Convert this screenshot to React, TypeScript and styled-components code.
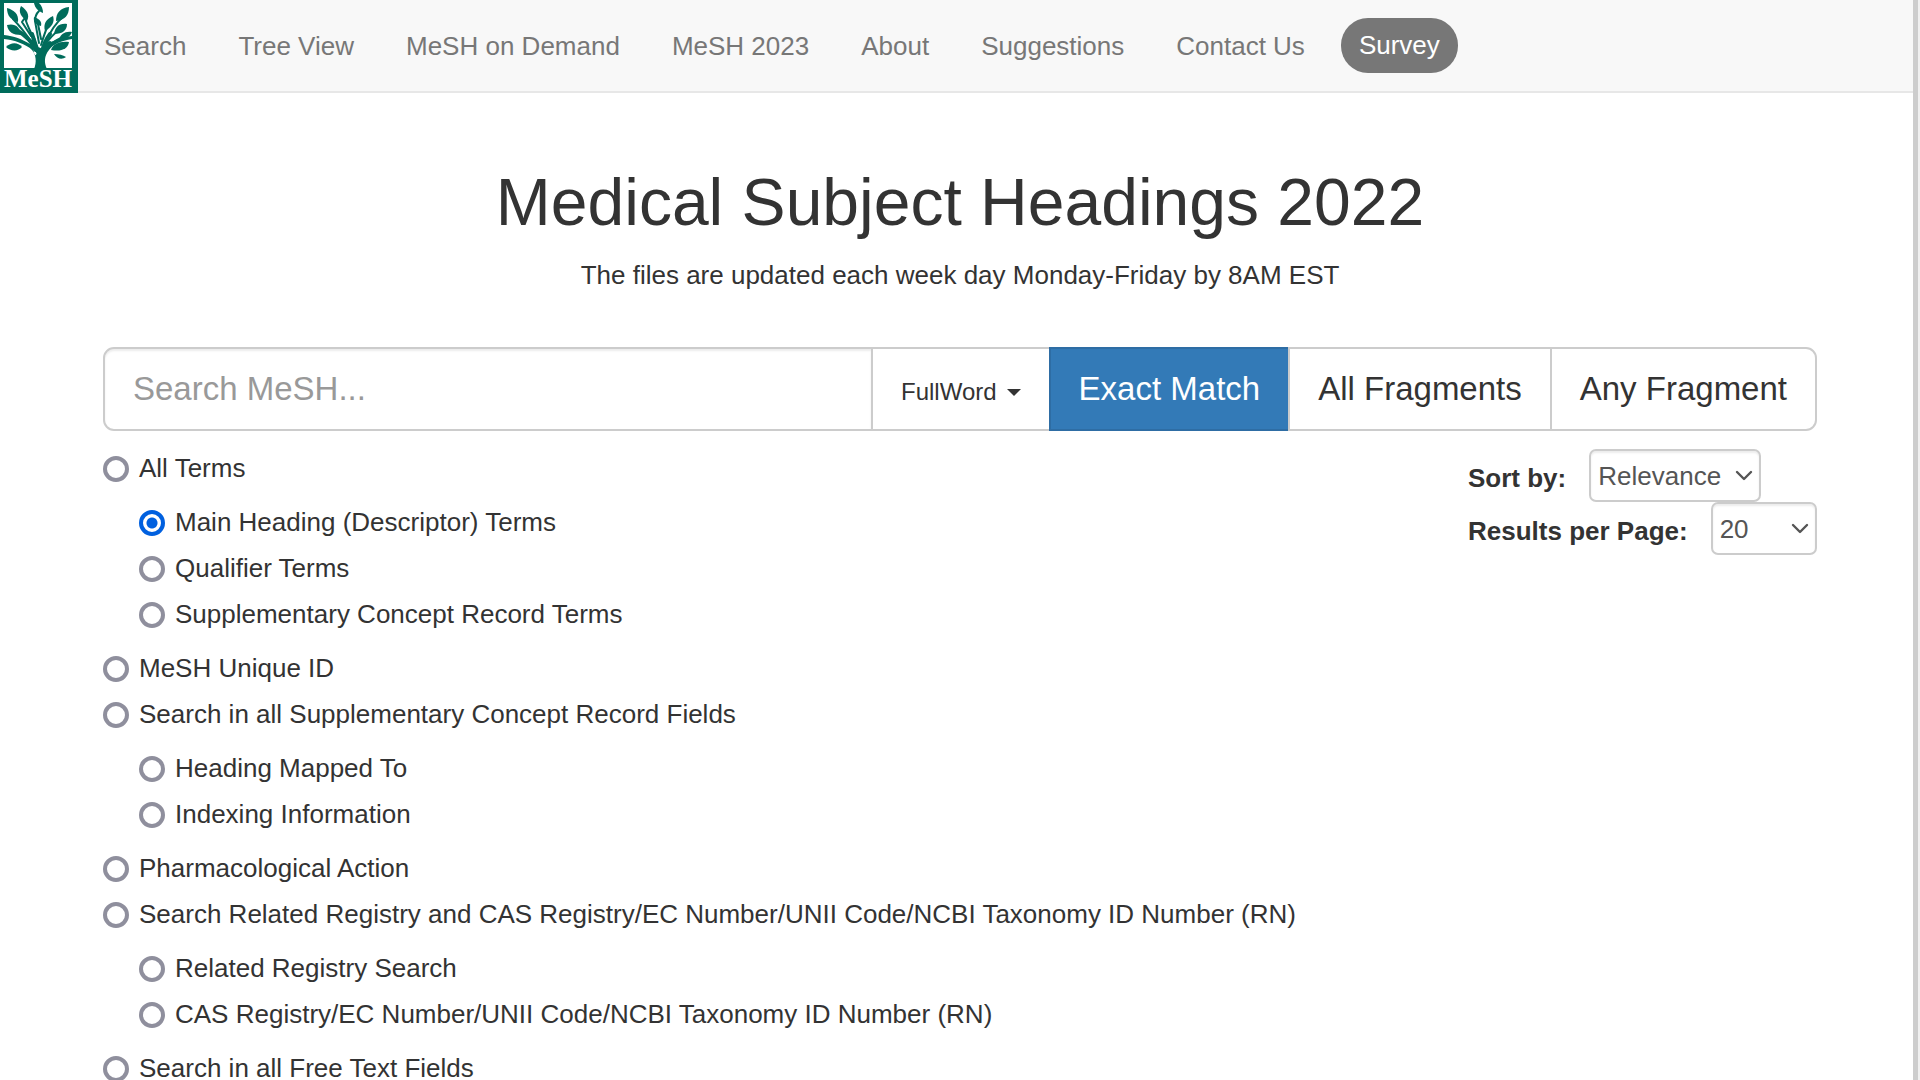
import React, { useState } from "react";
import styled, { createGlobalStyle } from "styled-components";

const GlobalStyle = createGlobalStyle`
  *, *::before, *::after { box-sizing: border-box; }
  html { overflow: hidden; }
  body {
    margin: 0;
    height: 100vh;
    background: #fff;
    color: #333;
    font: 26px/36px "Liberation Sans", Arial, sans-serif;
  }
`;

const Viewport = styled.div`
  display: flex;
  height: 100vh;
  overflow: hidden;
`;

const Page = styled.div`
  flex: 1;
  min-width: 0;
  height: 100vh;
  overflow: hidden;
`;

const ScrollTrack = styled.div`
  flex: none;
  width: 7px;
  background: #cdcdcd;
  border-right: 2px solid #f0f0f0;
`;

const Header = styled.header`
  display: flex;
  align-items: flex-start;
  height: 93px;
  background: #f8f8f8;
  border-bottom: 2px solid #e7e7e7;
`;

const Brand = styled.a`
  display: block;
  flex: none;

  svg { display: block; }
`;

const Nav = styled.nav`
  display: flex;
  align-items: center;
  height: 91px;
`;

const NavLink = styled.a`
  padding: 0 26px;
  color: #777;
  text-decoration: none;
  white-space: nowrap;
`;

const SurveyLink = styled(NavLink)`
  margin-left: 10px;
  padding: 10px 18px;
  border-radius: 27px;
  background: #777;
  color: #fff;
  line-height: 35px;
`;

const Container = styled.main`
  padding: 73px 96px 0 103px;
`;

const Title = styled.h1`
  margin: 0;
  font-size: 66px;
  font-weight: 400;
  line-height: 72px;
  text-align: center;
`;

const Subtitle = styled.p`
  margin: 19px 0 54px;
  text-align: center;
`;

const SearchGroup = styled.form`
  display: flex;
  height: 84px;
`;

const SearchInput = styled.input`
  flex: 1;
  min-width: 0;
  padding: 0 28px;
  border: 2px solid #ccc;
  border-radius: 11px 0 0 11px;
  background: #fff;
  box-shadow: inset 0 2px 2px rgba(0, 0, 0, 0.075);
  color: #555;
  font: 33px "Liberation Sans", Arial, sans-serif;
  outline: none;

  &::placeholder { color: #999; opacity: 1; }
`;

const GroupButton = styled.button<{ $active?: boolean }>`
  margin: 0 0 0 -2px;
  padding: 0 28px;
  border: 2px solid ${(p) => (p.$active ? "#2e6da4" : "#ccc")};
  background: ${(p) => (p.$active ? "#337ab7" : "#fff")};
  color: ${(p) => (p.$active ? "#fff" : "#333")};
  font: 33px "Liberation Sans", Arial, sans-serif;
  white-space: nowrap;
  cursor: pointer;

  &:last-child { border-radius: 0 11px 11px 0; }
`;

const DropButton = styled(GroupButton)`
  display: flex;
  align-items: center;
  gap: 10px;
  padding-top: 6px;
  font-size: 24px;
`;

const Caret = styled.span`
  border: 7px solid transparent;
  border-top-color: currentColor;
  border-bottom: 0;
`;

const Options = styled.div`
  display: flex;
  justify-content: space-between;
  align-items: flex-start;
`;

const RadioList = styled.ul`
  margin: 0;
  padding: 19px 0 0;
  list-style: none;
`;

const SubList = styled.ul`
  margin: 0;
  padding: 8px 0 8px 36px;
  list-style: none;
`;

const RadioLabel = styled.label`
  display: flex;
  align-items: center;
  gap: 10px;
  height: 46px;
  padding-bottom: 10px;
  white-space: nowrap;
  cursor: pointer;
`;

const Radio = styled.input`
  appearance: none;
  flex: none;
  width: 26px;
  height: 26px;
  margin: 2px 0 0;
  border: 4px solid #8f8f9d;
  border-radius: 50%;
  background: #fff;

  &:checked {
    border-color: #0060df;
    background: radial-gradient(circle, #0060df 5px, #fff 6px);
  }
`;

const Settings = styled.div`
  display: grid;
  width: 349px;
  padding-top: 18px;
`;

const Setting = styled.div`
  display: flex;
  align-items: center;
  gap: 23px;
`;

const SettingLabel = styled.label`
  padding-top: 4px;
  font-weight: 700;
  white-space: nowrap;
`;

const SelectBox = styled.span<{ $grow?: boolean }>`
  display: grid;
  align-items: center;
  flex: ${(p) => (p.$grow ? 1 : "none")};
  width: ${(p) => (p.$grow ? "auto" : "172px")};

  > * { grid-area: 1 / 1; }
  svg { justify-self: end; margin-right: 8px; pointer-events: none; }
`;

const Select = styled.select`
  appearance: none;
  width: 100%;
  height: 53px;
  padding: 0 7px;
  border: 2px solid #ccc;
  border-radius: 7px;
  background: #fff;
  box-shadow: inset 0 2px 2px rgba(0, 0, 0, 0.075);
  color: #555;
  font: 26px "Liberation Sans", Arial, sans-serif;
`;

const Chevron = () => (
  <svg width="18" height="12" viewBox="0 0 18 12" fill="none" aria-hidden="true">
    <path d="M2 2l7 7 7-7" stroke="#555" strokeWidth="2.4" strokeLinecap="round" strokeLinejoin="round" />
  </svg>
);

const Logo = () => (
  <svg width="78" height="93" viewBox="0 0 78 93" role="img" aria-label="MeSH">
    <path fill="#006c5b" d="M0 0h78v93H0z" />
    <path fill="#fff" d="M4 3h68v65H4z" />
    <path fill="#006c5b" d="M34 69c3-7 2-14-2-19C26 44 14 40 4 39v-4c10 1 18 4 26 9h5c-3 9 0 17 3 6h4c4-5 8-8 14-10l9-3 7-1v3c-11 2-19 5-23 11-5 6-5 13-2 19z" />
    <g fill="none" stroke="#006c5b" strokeLinecap="round">
      <path strokeWidth="4" d="M18 31q12 7 18 19M38 52l-6-18M42 52q2-10 8-18M36 48l6 3 8-8" />
      <path strokeWidth="2" d="M13 19q8 8 20 25M25 18q3 10 10 22M24 19l-2 3 9 14M39 11q-4 4-4 10l4 22M38 24l3 15M48 25q-3 7-7 20M62 18q-8 6-17 25M58 31q-6 4-13 14M66 36q-9 3-18 10" />
    </g>
    <g fill="#006c5b">
      <path d="M7 8c7 2 12 6 11 14-7-2-11-6-11-14z" />
      <path d="M21 6c6 4 9 9 6 15-6-4-9-9-6-15z" />
      <path d="M34 3h5c3 3 4 6 4 10-5-2-8-5-9-10z" />
      <path d="M69 7c0 8-4 13-13 14 0-8 4-13 13-14z" />
      <path d="M53 16c2 6-1 11-8 15-2-7 1-12 8-15z" />
      <path d="M34 17c6 2 8 5 7 9-5-1-8-4-7-9z" />
      <path d="M7 25c8-2 13 2 14 10-8 0-13-3-14-10z" />
      <path d="M67 24c0 6-4 10-13 10 1-7 5-11 13-10z" />
      <path d="M72 32c-2 5-6 7-13 7 2-5 6-8 13-7z" />
      <path d="M6 47c5-5 12-5 16 0-4 5-12 4-16 0z" />
      <path d="M51 50c2-6 8-9 18-8-1 7-8 10-18 8z" />
      <path d="M54 54c5 0 9 1 12 3-4 3-9 2-12-3z" />
    </g>
    <text x="38" y="87" textAnchor="middle" fill="#fff" fontFamily="Liberation Serif, serif" fontWeight="700" fontSize="25">MeSH</text>
  </svg>
);

const NAV = ["Search", "Tree View", "MeSH on Demand", "MeSH 2023", "About", "Suggestions", "Contact Us"];

const FIELDS: { label: string; children?: string[] }[] = [
  {
    label: "All Terms",
    children: ["Main Heading (Descriptor) Terms", "Qualifier Terms", "Supplementary Concept Record Terms"],
  },
  { label: "MeSH Unique ID" },
  {
    label: "Search in all Supplementary Concept Record Fields",
    children: ["Heading Mapped To", "Indexing Information"],
  },
  { label: "Pharmacological Action" },
  {
    label: "Search Related Registry and CAS Registry/EC Number/UNII Code/NCBI Taxonomy ID Number (RN)",
    children: ["Related Registry Search", "CAS Registry/EC Number/UNII Code/NCBI Taxonomy ID Number (RN)"],
  },
  { label: "Search in all Free Text Fields" },
];

export default function App() {
  const [field, setField] = useState("Main Heading (Descriptor) Terms");

  const radio = (label: string) => (
    <RadioLabel>
      <Radio type="radio" name="field" checked={field === label} onChange={() => setField(label)} />
      {label}
    </RadioLabel>
  );

  return (
    <Viewport>
      <GlobalStyle />
      <Page>
        <Header>
          <Brand href="#"><Logo /></Brand>
          <Nav>
            {NAV.map((item) => <NavLink key={item} href="#">{item}</NavLink>)}
            <SurveyLink href="#">Survey</SurveyLink>
          </Nav>
        </Header>
        <Container>
          <Title>Medical Subject Headings 2022</Title>
          <Subtitle>The files are updated each week day Monday-Friday by 8AM EST</Subtitle>
          <SearchGroup onSubmit={(e) => e.preventDefault()}>
            <SearchInput type="text" placeholder="Search MeSH..." aria-label="Search MeSH" />
            <DropButton type="button">FullWord<Caret /></DropButton>
            <GroupButton type="submit" $active>Exact Match</GroupButton>
            <GroupButton type="button">All Fragments</GroupButton>
            <GroupButton type="button">Any Fragment</GroupButton>
          </SearchGroup>
          <Options>
            <RadioList>
              {FIELDS.map(({ label, children }) => (
                <li key={label}>
                  {radio(label)}
                  {children && (
                    <SubList>
                      {children.map((child) => <li key={child}>{radio(child)}</li>)}
                    </SubList>
                  )}
                </li>
              ))}
            </RadioList>
            <Settings>
              <Setting>
                <SettingLabel htmlFor="sort">Sort by:</SettingLabel>
                <SelectBox>
                  <Select id="sort"><option>Relevance</option></Select>
                  <Chevron />
                </SelectBox>
              </Setting>
              <Setting>
                <SettingLabel htmlFor="size">Results per Page:</SettingLabel>
                <SelectBox $grow>
                  <Select id="size"><option>20</option><option>50</option><option>100</option></Select>
                  <Chevron />
                </SelectBox>
              </Setting>
            </Settings>
          </Options>
        </Container>
      </Page>
      <ScrollTrack />
    </Viewport>
  );
}
